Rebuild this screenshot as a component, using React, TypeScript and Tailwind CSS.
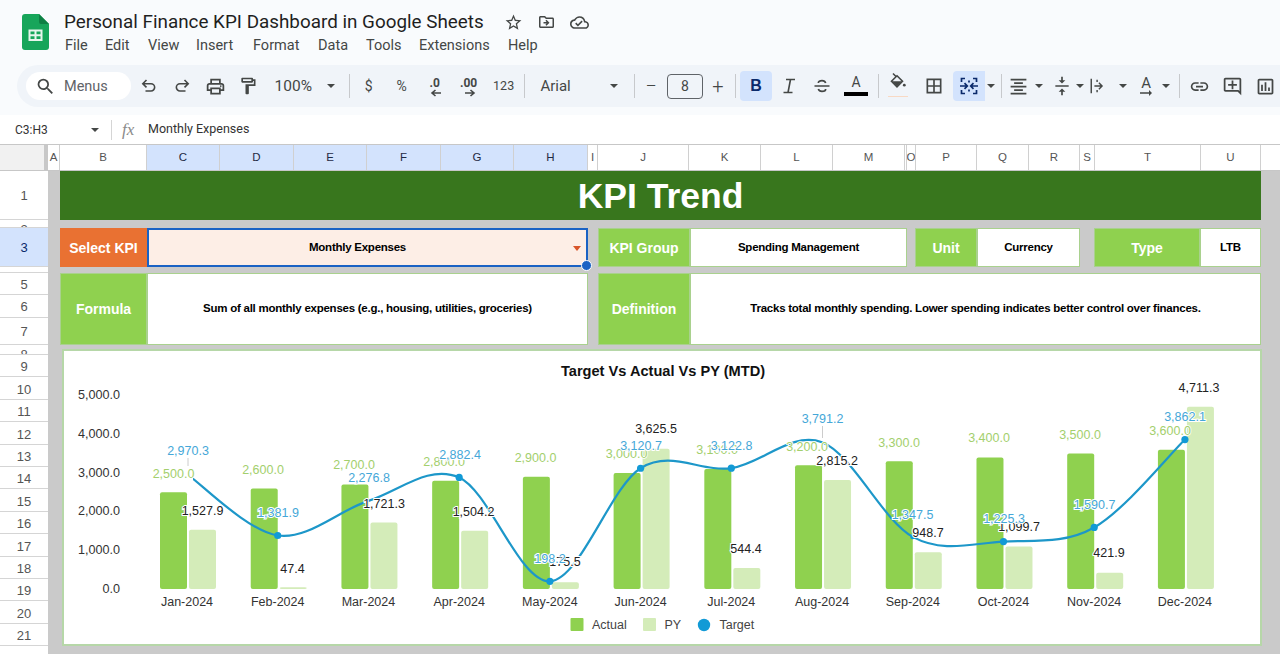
import React from "react";
import {
  MdSearch, MdOutlinePrint, MdOutlineFormatPaint, MdStarBorder,
  MdOutlineDriveFileMove, MdOutlineCloudDone,
  MdBorderAll, MdFormatAlignCenter, MdVerticalAlignCenter, MdLink, MdOutlineAddComment, MdOutlineInsertChart, MdArrowRightAlt,
} from "react-icons/md";

const months = ["Jan-2024","Feb-2024","Mar-2024","Apr-2024","May-2024","Jun-2024","Jul-2024","Aug-2024","Sep-2024","Oct-2024","Nov-2024","Dec-2024"];
const actual = [2500,2600,2700,2800,2900,3000,3100,3200,3300,3400,3500,3600];
const py = [1527.9,47.4,1721.3,1504.2,175.5,3625.5,544.4,2815.2,948.7,1099.7,421.9,4711.3];
const target = [2970.3,1381.9,2276.8,2882.4,198.2,3120.7,3122.8,3791.2,1347.5,1225.3,1590.7,3862.1];
const actualPos = [[173.5,474],[263,470],[354,465],[444,462],[535.5,458],[626.5,454],[717,450],[807,447],[899,443],[989,438],[1080,435],[1170,431]];
const pyPos = [[202.5,511],[292.5,569],[384,503.5],[473.5,512],[565,562],[656,429],[746,549],[837,461],[928,533],[1019,527],[1109,553],[1199,388]];
const targetPos = [[188,451],[278,513],[369,478],[460,455],[550,559],[641,446],[731.5,446],[822.5,419],[912.5,515],[1004,519],[1094.5,505],[1185,417]];

const fmt = (v: number) => v.toLocaleString("en-US", { minimumFractionDigits: 1, maximumFractionDigits: 1 });
const cx = (i: number) => 187 + i * 90.72;
const base = 589;
const k = 0.0387;
const pts = target.map((v, i) => [cx(i), base - v * k]);
const linePath = pts.reduce((d, p, i) => {
  if (i === 0) return `M${p[0]} ${p[1]}`;
  const p0 = pts[Math.max(i - 2, 0)], p1 = pts[i - 1], p3 = pts[Math.min(i + 1, pts.length - 1)];
  const c1x = p1[0] + (p[0] - p0[0]) / 6, c1y = p1[1] + (p[1] - p0[1]) / 6;
  const c2x = p[0] - (p3[0] - p1[0]) / 6, c2y = p[1] - (p3[1] - p1[1]) / 6;
  return `${d} C${c1x} ${c1y} ${c2x} ${c2y} ${p[0]} ${p[1]}`;
}, "");

function Chart() {
  return (
    <svg className="block w-full h-full" viewBox="0 0 1196 293">
      <g transform="translate(-64,-351)">
        <text x="663" y="371" textAnchor="middle" dominantBaseline="central" fontSize="14.6" fontWeight="700" fill="#111">Target Vs Actual Vs PY (MTD)</text>
        {[5000,4000,3000,2000,1000,0].map((v) => (
          <text key={v} x="120" y={base - v * 0.0388} textAnchor="end" dominantBaseline="central" fontSize="12.6" fill="#333">{fmt(v)}</text>
        ))}
        {months.map((m, i) => (
          <g key={m}>
            <rect x={cx(i) - 27} y={base - actual[i] * k} width="27" height={actual[i] * k} rx="2" fill="#8fd14f" />
            <rect x={cx(i) + 2} y={base - py[i] * k} width="27" height={py[i] * k} rx="2" fill="#d4ecb9" />
            <text x={cx(i)} y="602" textAnchor="middle" dominantBaseline="central" fontSize="12.5" fill="#333">{m}</text>
          </g>
        ))}
        <line x1="188" y1="458" x2="188" y2="470" stroke="#ccc" strokeWidth="1" />
        <line x1="822.5" y1="426" x2="822.5" y2="438" stroke="#ccc" strokeWidth="1" />
        <path d={linePath} fill="none" stroke="#1d97c9" strokeWidth="2.2" />
        {pts.map((p, i) => (i === 0 || i === 2 || i === 7 ? null : <circle key={i} cx={p[0]} cy={p[1]} r={i === 8 ? 2.5 : 3.6} fill="#129ad6" />))}
        <rect x="150" y="466" width="43" height="14" fill="#fff" />
        {actual.map((v, i) => (
          <text key={i} x={actualPos[i][0]} y={actualPos[i][1]} textAnchor="middle" dominantBaseline="central" fontSize="12.5" fill="#a3cf6d" stroke="#fff" strokeWidth="1.5" paintOrder="stroke">{fmt(v)}</text>
        ))}
        {py.map((v, i) => (
          <text key={i} x={pyPos[i][0]} y={pyPos[i][1]} textAnchor="middle" dominantBaseline="central" fontSize="12.5" fill="#222" stroke="#fff" strokeWidth="2" paintOrder="stroke">{fmt(v)}</text>
        ))}
        {target.map((v, i) => (
          <text key={i} x={targetPos[i][0]} y={targetPos[i][1]} textAnchor="middle" dominantBaseline="central" fontSize="12.5" fill="#45a7d8" stroke="#fff" strokeWidth="2" paintOrder="stroke">{fmt(v)}</text>
        ))}
        <rect x="570.5" y="618" width="13" height="13" rx="1" fill="#8fd14f" />
        <text x="592" y="625" dominantBaseline="central" fontSize="12.5" fill="#444">Actual</text>
        <rect x="643" y="618" width="13" height="13" rx="1" fill="#d4ecb9" />
        <text x="664.5" y="625" dominantBaseline="central" fontSize="12.5" fill="#444">PY</text>
        <circle cx="704" cy="625" r="6.2" fill="#129ad6" />
        <text x="719.5" y="625" dominantBaseline="central" fontSize="12.5" fill="#444">Target</text>
      </g>
    </svg>
  );
}

const Caret = ({ className = "" }: { className?: string }) => (
  <div className={`flex items-center justify-center ${className}`}>
    <div className="w-0 h-0 border-x-[4px] border-x-transparent border-t-[4px] border-t-[#444746]" />
  </div>
);
const Sep = ({ className = "" }: { className?: string }) => (
  <div className={`flex items-center justify-center ${className}`}><div className="w-px h-[24px] bg-[#c7c9cc]" /></div>
);
const Slot = ({ className = "", children }: { className?: string; children?: React.ReactNode }) => (
  <div className={`flex items-center justify-center shrink-0 h-[30px] text-[#444746] ${className}`}>{children}</div>
);
const Stroke = ({ size = 20, d }: { size?: number; d: string }) => (
  <svg width={size} height={size} viewBox="0 0 20 20" fill="none" stroke="#444746" strokeWidth="1.6"><path d={d} /></svg>
);

const columns = [
  { n: "A", w: "w-[12px]" }, { n: "B", w: "w-[87px]" }, { n: "C", w: "w-[73px]", s: 1 }, { n: "D", w: "w-[74px]", s: 1 },
  { n: "E", w: "w-[73px]", s: 1 }, { n: "F", w: "w-[74px]", s: 1 }, { n: "G", w: "w-[73px]", s: 1 }, { n: "H", w: "w-[74px]", s: 1 },
  { n: "I", w: "w-[10px]" }, { n: "J", w: "w-[91px]" }, { n: "K", w: "w-[72px]" }, { n: "L", w: "w-[72px]" }, { n: "M", w: "w-[72px]" },
  { n: "", w: "w-[2px]" }, { n: "O", w: "w-[9px]" }, { n: "P", w: "w-[61px]" }, { n: "Q", w: "w-[52px]" }, { n: "R", w: "w-[51px]" },
  { n: "S", w: "w-[15px]" }, { n: "T", w: "w-[106px]" }, { n: "U", w: "w-[60px]" },
];
const rows = [
  { n: "1", h: "h-[49px] items-center pt-[2px]" }, { n: "2", h: "h-[8px] items-start" }, { n: "3", h: "h-[39px] items-center pt-[2px] bg-[#d3e3fd] text-[#0b2a6b]" },
  { n: "4", h: "h-[6px] items-start" }, { n: "5", h: "h-[22px] items-center pt-[2px]" }, { n: "6", h: "h-[23px] items-center pt-[2px]" }, { n: "7", h: "h-[27px] items-center pt-[2px]" },
  { n: "8", h: "h-[10px] items-start" },
  ...["9","10","11","12","13","14","15","16","17","18","19","20","21","22"].map((n) => ({ n, h: "h-[22.4px] items-center pt-[3px]" })),
];

const Label = ({ className = "", children }: { className?: string; children: React.ReactNode }) => (
  <div className={`flex items-center justify-center shrink-0 bg-[#8fd14f] text-white font-bold text-[14px] pt-px border border-[#a9d18e] ${className}`}>{children}</div>
);
const Value = ({ className = "", children }: { className?: string; children: React.ReactNode }) => (
  <div className={`flex items-center justify-center shrink-0 bg-white text-black font-bold text-[11.5px] tracking-[-0.25px] border border-[#a9d18e] ${className}`}>{children}</div>
);

export default function App() {
  return (
    <div className="w-[1280px] h-[654px] overflow-hidden bg-white [font-family:'Liberation_Sans',sans-serif]">
      {/* title area */}
      <div className="h-[65px] bg-[#f9fbfd] flex [font-family:Roboto,sans-serif]">
        <div className="w-[64px] pl-[22px] pt-[14px] shrink-0">
          <svg width="27" height="36" viewBox="0 0 27 36">
            <path d="M3 0H17L27 10V33a3 3 0 0 1-3 3H3a3 3 0 0 1-3-3V3a3 3 0 0 1 3-3Z" fill="#17a55a" />
            <path d="M17 0L27 10H19a2 2 0 0 1-2-2Z" fill="#0e8044" />
            <path d="M6.5 15.5H20.5V27H6.5ZM8.5 17.5V20.2H12.5V17.5ZM14.5 17.5V20.2H18.5V17.5ZM8.5 22.2V25H12.5V22.2ZM14.5 22.2V25H18.5V22.2Z" fill="#e8f5ec" fillRule="evenodd" />
          </svg>
        </div>
        <div>
          <div className="flex items-center h-[24px] mt-[10px]">
            <div className="text-[18.85px] leading-[24px] text-[#1f1f1f] w-[433px] whitespace-nowrap">Personal Finance KPI Dashboard in Google Sheets</div>
            <MdStarBorder className="text-[#444746] text-[19px] w-[33px] shrink-0" />
            <MdOutlineDriveFileMove className="text-[#444746] text-[18px] w-[33px] shrink-0" />
            <MdOutlineCloudDone className="text-[#444746] text-[19px] w-[33px] shrink-0" />
          </div>
          <div className="flex items-center h-[20px] mt-[2px] text-[14.5px] text-[#444746] whitespace-nowrap">
            <span className="w-[41px] pl-px">File</span>
            <span className="w-[43px]">Edit</span>
            <span className="w-[48px]">View</span>
            <span className="w-[57px]">Insert</span>
            <span className="w-[65px]">Format</span>
            <span className="w-[48px]">Data</span>
            <span className="w-[53px]">Tools</span>
            <span className="w-[89px]">Extensions</span>
            <span>Help</span>
          </div>
        </div>
      </div>
      {/* toolbar */}
      <div className="h-[50px] bg-[#f9fbfd] pl-[17px] [font-family:Roboto,sans-serif]">
        <div className="h-[42px] bg-[#f0f4f9] rounded-l-[21px] pl-[9px] flex items-center whitespace-nowrap">
          <div className="w-[105px] h-[28px] shrink-0 rounded-full bg-white flex items-center text-[#5f6368] pl-[9px] mr-[1.5px]">
            <MdSearch className="text-[21px] text-[#444746]" />
            <span className="ml-[8px] pt-px text-[14.5px] text-[#5f6368]">Menus</span>
          </div>
          <Slot className="w-[33px]"><Stroke d="M7.5 4 3.8 7.7l3.7 3.7M3.8 7.7H12a3.6 3.6 0 0 1 0 7.3H6.5" /></Slot>
          <Slot className="w-[33px]"><Stroke d="M12.5 4l3.7 3.7-3.7 3.7M16.2 7.7H8a3.6 3.6 0 0 0 0 7.3h5.5" /></Slot>
          <Slot className="w-[33px]"><MdOutlinePrint className="text-[21px]" /></Slot>
          <Slot className="w-[33px]"><MdOutlineFormatPaint className="text-[20px]" /></Slot>
          <Slot className="w-[57.5px] pt-[2px] text-[15.5px]">100%</Slot>
          <Caret className="w-[19px]" />
          <Sep className="w-[18px]" />
          <Slot className="w-[20px] text-[14px]">$</Slot>
          <Slot className="w-[46px] text-[14px]">%</Slot>
          <Slot className="w-[20px] relative text-[12px] font-bold">
            <span className="-mt-[6px]">.0</span>
            <svg className="absolute left-[5px] top-[18px]" width="12" height="8" viewBox="0 0 12 8"><path d="M11 4H3M5.5 1L2 4l3.5 3" fill="none" stroke="#444746" strokeWidth="1.6" /></svg>
          </Slot>
          <Slot className="w-[48px] relative text-[12px] font-bold">
            <span className="-mt-[6px]">.00</span>
            <svg className="absolute left-[19px] top-[18px]" width="12" height="8" viewBox="0 0 12 8"><path d="M1 4h8M6.5 1L10 4 6.5 7" fill="none" stroke="#444746" strokeWidth="1.6" /></svg>
          </Slot>
          <Slot className="w-[22px] text-[12.5px]">123</Slot>
          <Sep className="w-[20px]" />
          <Slot className="w-[70px] justify-start pl-[6px] text-[15px]">Arial</Slot>
          <Caret className="w-[20px]" />
          <Sep className="w-[20px]" />
          <Slot className="w-[14px] text-[20px] font-light">−</Slot>
          <div className="w-[36px] h-[25px] ml-[9px] shrink-0 flex items-center justify-center rounded-[4px] border border-[#5f6368] text-[14px] text-[#444746]">8</div>
          <Slot className="w-[30px] text-[20px] font-light">+</Slot>
          <Sep className="w-[6px]" />
          <div className="w-[32px] h-[30px] ml-px shrink-0 rounded-[4px] bg-[#d3e3fd] flex items-center justify-center text-[#0b2a6b] text-[16px] font-bold [font-family:'Liberation_Sans',sans-serif]">B</div>
          <Slot className="w-[34px]"><Stroke d="M7 3.5h9M4.5 16.5h9M11.5 3.5 9 16.5" /></Slot>
          <Slot className="w-[32px]"><Stroke d="M2.5 10h15M13.7 7c-.5-1.7-2-2.4-3.7-2.4-2.1 0-3.7 1-3.7 2.4M6.3 13c.5 1.7 2 2.4 3.7 2.4 2.1 0 3.7-1 3.7-2.4" /></Slot>
          <Slot className="w-[36px] relative text-[14px]">
            <span className="-mt-[7px]">A</span>
            <div className="absolute left-[6px] top-[21px] w-[24px] h-[4px] bg-black" />
          </Slot>
          <Sep className="w-[10px]" />
          <Slot className="w-[28px] relative">
            <svg className="-mt-[8px]" width="20" height="20" viewBox="0 0 20 20" fill="none" stroke="#444746" strokeWidth="1.6">
              <path d="M5 1.5 8.5 5M9 3.8 14.5 9.3 9 14.8 3.5 9.3Z" />
              <path d="M3.8 9.3h10.4L9 14.6Z" fill="#444746" stroke="none" />
              <circle cx="16.3" cy="13.2" r="1.4" fill="#444746" stroke="none" />
            </svg>
            <div className="absolute left-[4px] top-[25px] w-[20px] h-px bg-[#f8d9c4]" />
          </Slot>
          <Slot className="w-[38px] ml-[3px]"><MdBorderAll className="text-[20px]" /></Slot>
          <div className="w-[32px] h-[30px] shrink-0 rounded-l-[4px] bg-[#d3e3fd] flex items-center justify-center">
            <svg width="20" height="20" viewBox="0 0 20 20" fill="none" stroke="#0b2a6b" strokeWidth="1.7">
              <path d="M6 2.5H2.5V6M6 17.5H2.5V14M14 2.5h3.5V6M14 17.5h3.5V14" />
              <path d="M1 10h7M5.5 7.2 8.3 10l-2.8 2.8M19 10h-7M14.5 7.2 11.7 10l2.8 2.8" />
              <path d="M10 4.5v2M10 13.5v2" />
            </svg>
          </div>
          <Caret className="w-[12px]" />
          <Sep className="w-[10px]" />
          <Slot className="w-[24px]"><MdFormatAlignCenter className="text-[21px]" /></Slot>
          <Caret className="w-[16px]" />
          <Slot className="w-[28px] ml-[2px]"><MdVerticalAlignCenter className="text-[20px]" /></Slot>
          <Caret className="w-[8px]" />
          <Slot className="w-[28px]">
            <Stroke size={18} d="M2.5 2v16M6 10h8.5M11 6.5l3.5 3.5-3.5 3.5M9 3v2.5M9 14.5V17" />
          </Slot>
          <Caret className="w-[22px]" />
          <Slot className="w-[24px] relative text-[15px]">
            <span className="-mt-[6px]">A</span>
            <MdArrowRightAlt className="absolute left-[3px] top-[13px] text-[18px]" />
          </Slot>
          <Caret className="w-[16px]" />
          <Sep className="w-[10px]" />
          <Slot className="w-[30px]"><MdLink className="text-[21px]" /></Slot>
          <Slot className="w-[36px]"><MdOutlineAddComment className="text-[21px]" /></Slot>
          <Slot className="w-[30px]"><MdOutlineInsertChart className="text-[21px]" /></Slot>
        </div>
      </div>
      {/* formula bar */}
      <div className="h-[30px] bg-white flex items-center border-b border-[#c7c7c7] text-[12.5px] text-[#333] whitespace-nowrap [font-family:Roboto,sans-serif]">
        <span className="w-[85px] pl-[15px] text-[12px]">C3:H3</span>
        <Caret className="w-[19px]" />
        <div className="w-px h-[20px] bg-[#d5d5d5] ml-[7px]" />
        <span className="ml-[10px] w-[26px] text-[17px] italic text-[#8a8a8a] [font-family:'Liberation_Serif',serif]">fx</span>
        <span>Monthly Expenses</span>
      </div>
      {/* column headers */}
      <div className="h-[26px] flex bg-white border-b border-[#c7c7c7] text-[11.5px] text-[#555]">
        <div className="w-[44px] bg-[#f1f1f1] shrink-0" />
        <div className="w-[4px] bg-[#c8c8c8] shrink-0" />
        {columns.map((c) => (
          <div key={c.n + c.w} className={`${c.w} shrink-0 flex items-center justify-center overflow-hidden border-r border-[#d0d0d0] ${c.s ? "bg-[#d3e3fd] text-[#1f2a44]" : ""}`}>{c.n}</div>
        ))}
      </div>
      {/* sheet */}
      <div className="flex">
        <div className="w-[48px] shrink-0 bg-white text-[13px] text-[#555]">
          {rows.map((r) => (
            <div key={r.n} className={`${r.h} flex justify-center overflow-hidden border-b border-[#d5d5d5]`}>{r.n}</div>
          ))}
        </div>
        <div className="w-[1232px] h-[483px] shrink-0 bg-[#cacaca] pl-[12px]">
          <div className="w-[1201px] h-[49px] bg-[#38761d] flex items-center justify-center pt-[2px] text-white font-bold text-[35.5px]">KPI Trend</div>
          <div className="flex h-[39px] mt-[8px]">
            <div className="w-[87px] shrink-0 flex items-center justify-center bg-[#e97132] text-white font-bold text-[14px] pt-px">Select KPI</div>
            <div className="relative w-[441px] shrink-0 flex items-center justify-center pr-[20px] bg-[#fdeee6] border-2 border-[#1a62c4] text-black font-bold text-[11.5px] tracking-[-0.25px]">
              Monthly Expenses
              <div className="absolute right-[5px] top-[16px] w-0 h-0 border-x-[4px] border-x-transparent border-t-[5px] border-t-[#d8552a]" />
              <div className="absolute -right-[6px] -bottom-[6px] w-[11px] h-[11px] rounded-full bg-[#1a62c4] border border-white" />
            </div>
            <Label className="w-[92px] ml-[10px]">KPI Group</Label>
            <Value className="w-[217px]">Spending Management</Value>
            <Label className="w-[62px] ml-[8px]">Unit</Label>
            <Value className="w-[103px]">Currency</Value>
            <Label className="w-[106px] ml-[14px]">Type</Label>
            <Value className="w-[61px]">LTB</Value>
          </div>
          <div className="flex h-[72px] mt-[6px]">
            <Label className="w-[87px]">Formula</Label>
            <Value className="w-[441px]">Sum of all monthly expenses (e.g., housing, utilities, groceries)</Value>
            <Label className="w-[92px] ml-[10px]">Definition</Label>
            <Value className="w-[571px]">Tracks total monthly spending. Lower spending indicates better control over finances.</Value>
          </div>
          <div className="w-[1200px] h-[297px] ml-[2px] mt-[4px] bg-white border-2 border-[#b6d7a8]">
            <Chart />
          </div>
        </div>
      </div>
    </div>
  );
}
